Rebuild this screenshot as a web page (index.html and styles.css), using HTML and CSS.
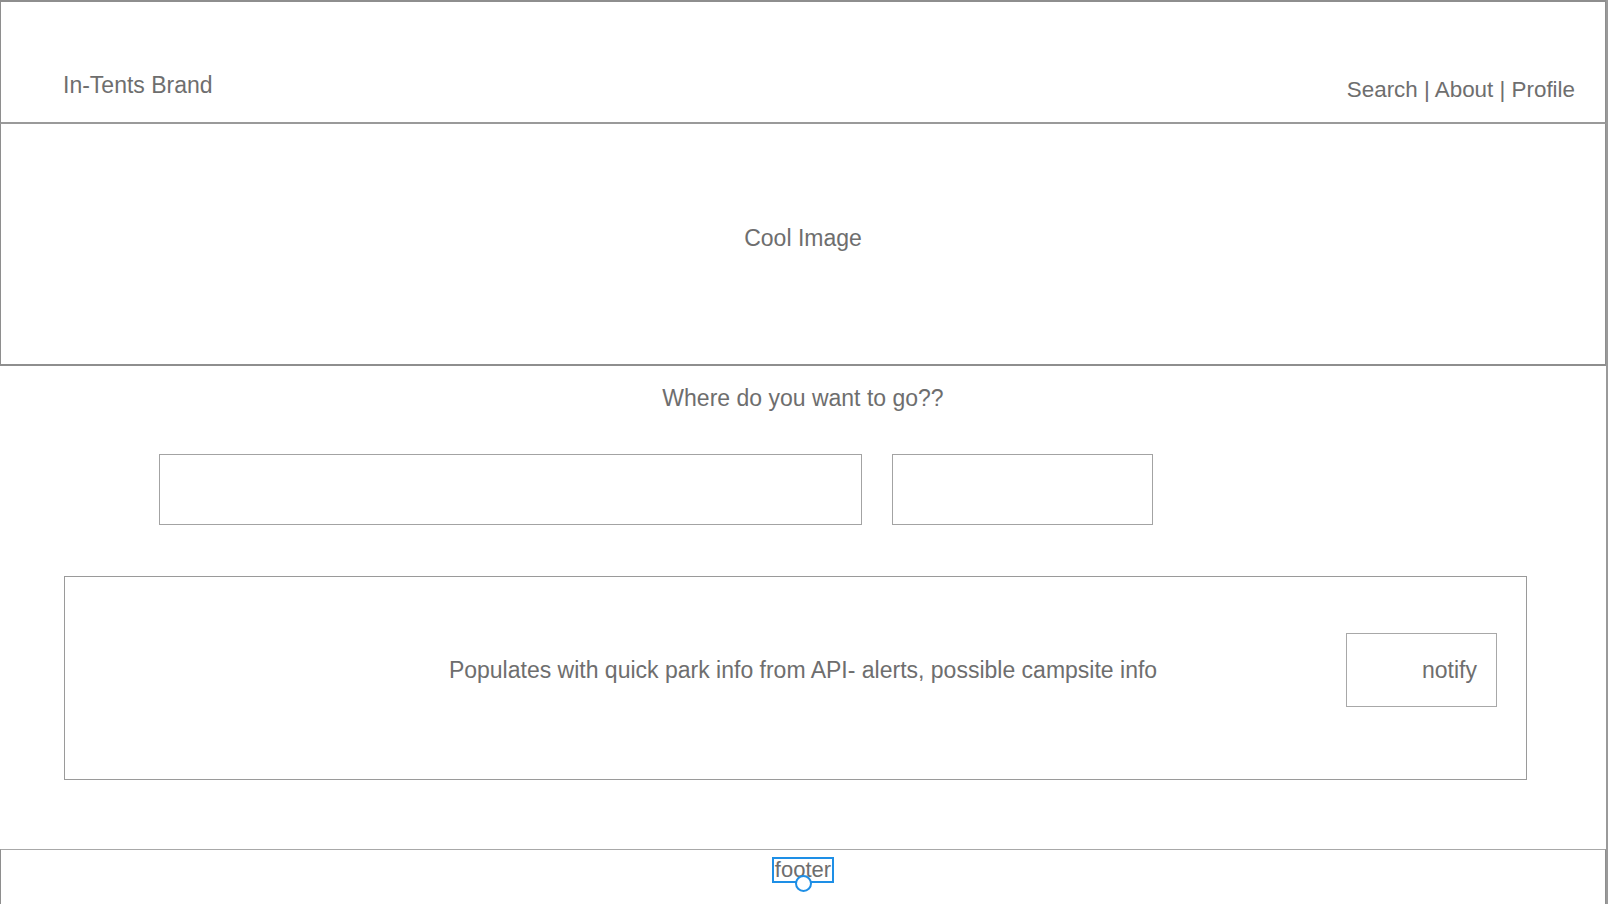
FILE: index.html
```html
<!DOCTYPE html>
<html lang="en">
<head>
<meta charset="utf-8">
<title>In-Tents</title>
<link rel="stylesheet" href="styles.css">
</head>
<body>
<div class="page">
  <header class="header">
    <div class="brand">In-Tents Brand</div>
    <nav class="nav">Search | About | Profile</nav>
  </header>
  <section class="hero">
    <div class="hero-text">Cool Image</div>
  </section>
  <main class="main">
    <div class="prompt">Where do you want to go??</div>
    <div class="inputs">
      <div class="field field-wide"></div>
      <div class="field field-narrow"></div>
    </div>
    <div class="info">
      <div class="info-text">Populates with quick park info from API- alerts, possible campsite info</div>
      <div class="notify">notify</div>
    </div>
  </main>
  <footer class="footer">
    <span class="footer-label">footer<span class="handle"></span></span>
  </footer>
</div>
</body>
</html>
```
FILE: styles.css
```css
html, body {
  margin: 0;
  padding: 0;
  background: #ffffff;
}
body {
  font-family: "Liberation Sans", Arial, Helvetica, sans-serif;
  font-size: 23px;
  line-height: 26px;
  color: #6e6e6e;
  overflow: hidden;
}
.page {
  width: 1608px;
  height: 904px;
  box-sizing: border-box;
  border-right: 2px solid #9a9a9a;
  display: flex;
  flex-direction: column;
}
.header {
  box-sizing: border-box;
  width: 1606px;
  height: 124px;
  border-top: 2px solid #8e8e8e;
  border-bottom: 2px solid #9a9a9a;
  border-left: 1px solid #8e8e8e;
  border-right: 1px solid #8e8e8e;
  display: flex;
  justify-content: space-between;
  align-items: flex-end;
  padding: 0 30px 19px 62px;
}
.brand {
  margin-bottom: 5px;
}
.nav {
  font-size: 22.4px;
}
.hero {
  box-sizing: border-box;
  width: 1606px;
  height: 242px;
  border-left: 1px solid #8e8e8e;
  border-right: 1px solid #8e8e8e;
  border-bottom: 2px solid #8e8e8e;
  display: flex;
  align-items: center;
  justify-content: center;
  padding-bottom: 12px;
}
.main {
  width: 1606px;
  flex: 1;
  display: flex;
  flex-direction: column;
}
.prompt {
  text-align: center;
  margin-top: 19px;
}
.inputs {
  display: flex;
  gap: 30px;
  margin-top: 43px;
  padding-left: 159px;
}
.field {
  box-sizing: border-box;
  height: 71px;
  border: 1px solid #a3a3a3;
}
.field-wide {
  width: 703px;
}
.field-narrow {
  width: 261px;
}
.info {
  box-sizing: border-box;
  margin-top: 51px;
  margin-left: 64px;
  width: 1463px;
  height: 204px;
  border: 1px solid #9a9a9a;
  display: grid;
  grid-template-columns: 1fr auto 1fr;
  align-items: center;
  padding: 56px 29px 72px 44px;
}
.info-text {
  grid-column: 2;
  white-space: nowrap;
}
.notify {
  grid-column: 3;
  justify-self: end;
  box-sizing: border-box;
  width: 151px;
  height: 74px;
  border: 1px solid #a8a8a8;
  display: flex;
  align-items: center;
  justify-content: flex-end;
  padding-right: 19px;
}
.footer {
  box-sizing: border-box;
  width: 1606px;
  height: 55px;
  border-top: 1px solid #a8a8a8;
  border-left: 1px solid #8e8e8e;
  border-right: 1px solid #8e8e8e;
  display: flex;
  justify-content: center;
  align-items: flex-start;
  padding-top: 7px;
}
.footer-label {
  position: relative;
  display: inline-block;
  border: 2px solid #1e8fe6;
  font-size: 22px;
  line-height: 22px;
  padding: 0 1px;
}
.handle {
  position: absolute;
  left: 50%;
  bottom: -11px;
  width: 13px;
  height: 13px;
  margin-left: -8px;
  border: 2px solid #1e8fe6;
  border-radius: 50%;
  background: #ffffff;
}
```
